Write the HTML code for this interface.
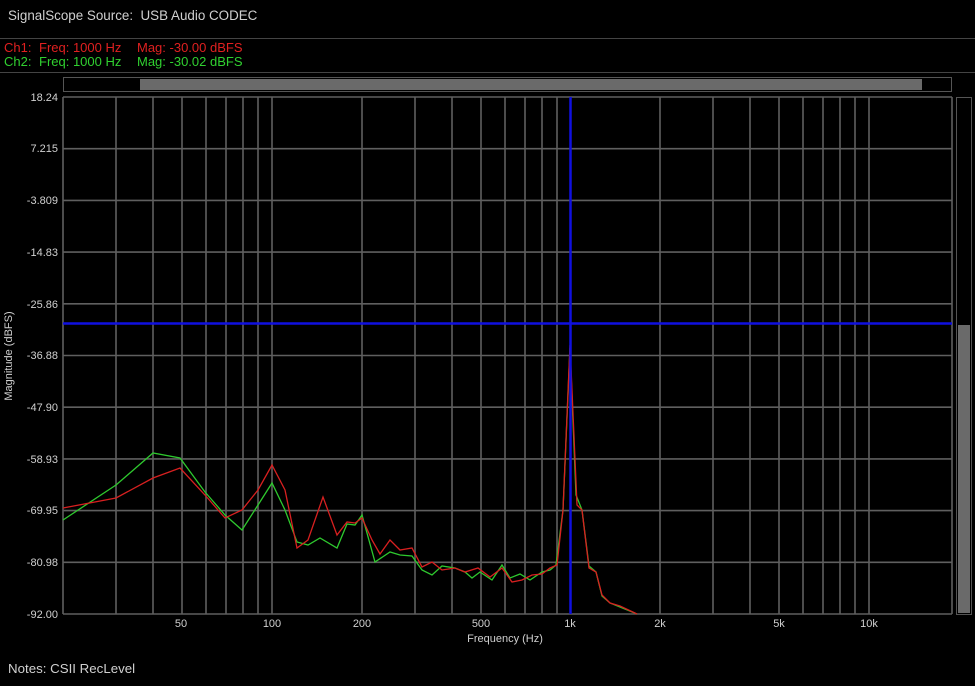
<!DOCTYPE html>
<html><head><meta charset="utf-8"><style>
html,body{margin:0;padding:0;background:#000;width:975px;height:686px;overflow:hidden;font-family:"Liberation Sans",Arial,sans-serif}
</style></head><body>
<svg width="975" height="686" xmlns="http://www.w3.org/2000/svg" font-family="Liberation Sans, Arial, sans-serif">
<rect width="975" height="686" fill="#000"/>
<text x="8" y="20" font-size="13.4" fill="#d0d0d0" xml:space="preserve">SignalScope Source:  USB Audio CODEC</text>
<line x1="0" y1="38.5" x2="975" y2="38.5" stroke="#444"/>
<g font-size="13" fill="#e02020"><text x="4" y="52">Ch1:</text><text x="39" y="52">Freq: 1000 Hz</text><text x="137" y="52">Mag: -30.00 dBFS</text></g>
<g font-size="13" fill="#30d030"><text x="4" y="66">Ch2:</text><text x="39" y="66">Freq: 1000 Hz</text><text x="137" y="66">Mag: -30.02 dBFS</text></g>
<line x1="0" y1="72.5" x2="975" y2="72.5" stroke="#444"/>
<rect x="63.5" y="77.5" width="888" height="14" fill="none" stroke="#555"/>
<rect x="140" y="79" width="782" height="11" fill="#6a6a6a"/>
<rect x="956.5" y="97.5" width="15" height="517" fill="none" stroke="#555"/>
<rect x="958" y="325" width="12" height="288" fill="#6a6a6a"/>
<g stroke="#5f5f5f" stroke-width="1.6">
<line x1="63" y1="97" x2="952" y2="97"/><line x1="63" y1="148.7" x2="952" y2="148.7"/><line x1="63" y1="200.4" x2="952" y2="200.4"/><line x1="63" y1="252.1" x2="952" y2="252.1"/><line x1="63" y1="303.8" x2="952" y2="303.8"/><line x1="63" y1="355.5" x2="952" y2="355.5"/><line x1="63" y1="407.2" x2="952" y2="407.2"/><line x1="63" y1="458.9" x2="952" y2="458.9"/><line x1="63" y1="510.6" x2="952" y2="510.6"/><line x1="63" y1="562.3" x2="952" y2="562.3"/><line x1="63" y1="614" x2="952" y2="614"/>
<line x1="63" y1="97" x2="63" y2="614"/><line x1="952" y1="97" x2="952" y2="614"/>
<line x1="116" y1="97" x2="116" y2="614"/><line x1="153" y1="97" x2="153" y2="614"/><line x1="182" y1="97" x2="182" y2="614"/><line x1="206" y1="97" x2="206" y2="614"/><line x1="226" y1="97" x2="226" y2="614"/><line x1="243" y1="97" x2="243" y2="614"/><line x1="258" y1="97" x2="258" y2="614"/><line x1="272" y1="97" x2="272" y2="614"/>
<line x1="362" y1="97" x2="362" y2="614"/><line x1="415" y1="97" x2="415" y2="614"/><line x1="452" y1="97" x2="452" y2="614"/><line x1="481" y1="97" x2="481" y2="614"/><line x1="505" y1="97" x2="505" y2="614"/><line x1="525" y1="97" x2="525" y2="614"/><line x1="542" y1="97" x2="542" y2="614"/><line x1="557" y1="97" x2="557" y2="614"/>
<line x1="660" y1="97" x2="660" y2="614"/><line x1="713" y1="97" x2="713" y2="614"/><line x1="750" y1="97" x2="750" y2="614"/><line x1="779" y1="97" x2="779" y2="614"/><line x1="803" y1="97" x2="803" y2="614"/><line x1="823" y1="97" x2="823" y2="614"/><line x1="840" y1="97" x2="840" y2="614"/><line x1="855" y1="97" x2="855" y2="614"/><line x1="869" y1="97" x2="869" y2="614"/>
</g>
<g font-size="11" fill="#d0d0d0" text-anchor="end">
<text x="58" y="101">18.24</text><text x="58" y="152">7.215</text><text x="58" y="204">-3.809</text><text x="58" y="256">-14.83</text><text x="58" y="308">-25.86</text><text x="58" y="359">-36.88</text><text x="58" y="411">-47.90</text><text x="58" y="463">-58.93</text><text x="58" y="514">-69.95</text><text x="58" y="566">-80.98</text><text x="58" y="618">-92.00</text>
</g>
<g font-size="11" fill="#d0d0d0" text-anchor="middle">
<text x="181" y="627">50</text><text x="272" y="627">100</text><text x="362" y="627">200</text><text x="481" y="627">500</text><text x="570" y="627">1k</text><text x="660" y="627">2k</text><text x="779" y="627">5k</text><text x="869" y="627">10k</text>
<text x="505" y="642">Frequency (Hz)</text>
</g>
<text x="12" y="356" font-size="11" fill="#d0d0d0" text-anchor="middle" transform="rotate(-90 12 356)">Magnitude (dBFS)</text>
<text x="8" y="673" font-size="13.3" fill="#d0d0d0">Notes: CSII RecLevel</text>
<polyline fill="none" stroke="#2ec82e" stroke-width="1.3" points="63,520 116,485 153,453 180,458 205,492 225,515 242,530 258,505 272,483 285,510 297,542 308,545 320,538 337,548 347,524 355,525 362,515 375,562 390,552 400,555 412,556 422,570 432,575 442,566 455,568 465,572 472,578 480,572 492,580 502,565 510,578 520,574 530,580 542,572 550,570 556,565 563,510 570,348 576,495 582,510 589,566 596,572 602,596 610,603 620,607 637,614"/>
<polyline fill="none" stroke="#d82020" stroke-width="1.3" points="63,508 116,498 153,478 180,468 205,495 225,518 242,510 258,490 272,465 285,490 297,548 308,540 323,497 337,535 347,522 355,523 362,518 372,540 380,554 390,540 400,550 412,548 422,567 432,562 442,570 455,568 465,572 478,568 490,577 502,568 512,582 522,580 532,575 542,574 550,568 557,565 563,510 570,345 577,505 582,510 589,568 596,572 602,595 610,603 620,606 637,614"/>
<line x1="570.5" y1="97" x2="570.5" y2="614" stroke="#1010e0" stroke-width="2.5"/>
<line x1="63" y1="323.5" x2="952" y2="323.5" stroke="#1010e0" stroke-width="2.5"/>
</svg>
</body></html>
